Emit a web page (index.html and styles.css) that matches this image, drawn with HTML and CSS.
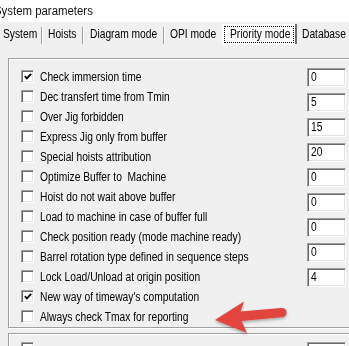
FILE: index.html
```html
<!DOCTYPE html>
<html>
<head>
<meta charset="utf-8">
<link rel="stylesheet" href="styles.css">
</head>
<body>
<div class="title"><span class="ttl">System parameters</span></div>
<div class="tabs">
  <div class="tab t1"><span class="lbl">System</span></div><div class="sep"></div>
  <div class="tab t2"><span class="lbl">Hoists</span></div><div class="sep"></div>
  <div class="tab t3"><span class="lbl">Diagram mode</span></div><div class="sep"></div>
  <div class="tab t4"><span class="lbl">OPI mode</span></div>
  <div class="tab sel"><span class="focus"><span class="lbl">Priority mode</span></span></div><div class="sep dark"></div>
  <div class="tab t6"><span class="lbl">Database</span></div>
</div>
<div class="panel">
  <div class="group">
    <div class="checks">
      <div class="row"><span class="cb"><svg viewBox="0 0 11 11" width="11" height="11"><path d="M2 5 L4.3 7.5 L9 2.5" fill="none" stroke="#000" stroke-width="2"/></svg></span><span class="lbl">Check immersion time</span></div>
      <div class="row"><span class="cb"></span><span class="lbl">Dec transfert time from Tmin</span></div>
      <div class="row"><span class="cb"></span><span class="lbl">Over Jig forbidden</span></div>
      <div class="row"><span class="cb"></span><span class="lbl">Express Jig only from buffer</span></div>
      <div class="row"><span class="cb"></span><span class="lbl">Special hoists attribution</span></div>
      <div class="row"><span class="cb"></span><span class="lbl">Optimize Buffer to &nbsp;Machine</span></div>
      <div class="row"><span class="cb"></span><span class="lbl">Hoist do not wait above buffer</span></div>
      <div class="row"><span class="cb"></span><span class="lbl">Load to machine in case of buffer full</span></div>
      <div class="row"><span class="cb"></span><span class="lbl">Check position ready (mode machine ready)</span></div>
      <div class="row"><span class="cb"></span><span class="lbl">Barrel rotation type defined in sequence steps</span></div>
      <div class="row"><span class="cb"></span><span class="lbl">Lock Load/Unload at origin position</span></div>
      <div class="row"><span class="cb"><svg viewBox="0 0 11 11" width="11" height="11"><path d="M2 5 L4.3 7.5 L9 2.5" fill="none" stroke="#000" stroke-width="2"/></svg></span><span class="lbl">New way of timeway's computation</span></div>
      <div class="row"><span class="cb"></span><span class="lbl">Always check Tmax for reporting</span></div>
    </div>
    <div class="inputs">
      <div class="inp"><span class="lbl">0</span></div>
      <div class="inp"><span class="lbl">5</span></div>
      <div class="inp"><span class="lbl">15</span></div>
      <div class="inp"><span class="lbl">20</span></div>
      <div class="inp"><span class="lbl">0</span></div>
      <div class="inp"><span class="lbl">0</span></div>
      <div class="inp"><span class="lbl">0</span></div>
      <div class="inp"><span class="lbl">0</span></div>
      <div class="inp"><span class="lbl">4</span></div>
    </div>
  </div>
  <div class="group group2">
    <div class="checks2"><div class="row"><span class="cb"></span></div></div>
    <div class="inputs2"><div class="inp"></div></div>
  </div>
</div>
<svg class="arrow" width="90" height="50" viewBox="205 292 90 50">
  <defs>
    <filter id="sh" x="-20%" y="-30%" width="140%" height="160%">
      <feDropShadow dx="0" dy="1.5" stdDeviation="1.5" flood-color="#000" flood-opacity="0.35"/>
    </filter>
  </defs>
  <path d="M215 320 L244 301.5 L240.5 311.5 L281 308 Q286.5 307.5 286.5 312.5 Q286.5 317 281 317.3 L241.5 321 L247 333 Z" fill="#e2443c" filter="url(#sh)"/>
</svg>
</body>
</html>
```
FILE: styles.css
```css
html, body {
  margin: 0;
  padding: 0;
}
body {
  width: 349px;
  height: 346px;
  overflow: hidden;
  background: #f0f0f0;
  position: relative;
  font-family: "Liberation Sans", Arial, sans-serif;
  font-size: 12.5px;
  color: #000;
}
.lbl {
  display: inline-block;
  transform: scaleX(0.82);
  transform-origin: left center;
  white-space: nowrap;
}
.title {
  height: 22px;
  line-height: 22px;
  background: #fff;
  font-size: 12px;
  color: #111;
  white-space: nowrap;
  overflow: hidden;
}
.ttl {
  display: inline-block;
  margin-left: -6px;
  transform: scaleX(0.95);
  transform-origin: left center;
}
.tabs {
  display: flex;
  height: 21px;
  align-items: stretch;
  white-space: nowrap;
  margin-top: 2px;
}
.tab {
  display: flex;
  align-items: center;
  box-sizing: border-box;
  overflow: hidden;
  padding-bottom: 1px;
}
.t1 { width: 41px; padding-left: 3px; }
.t2 { width: 39px; padding-left: 5px; }
.t3 { width: 79px; padding-left: 6px; }
.t4 { width: 57px; padding-left: 5px; }
.sel {
  width: 73px;
  background: #fff;
  padding-left: 2px;
  align-items: flex-start;
}
.focus {
  display: block;
  box-sizing: border-box;
  width: 70px;
  height: 17px;
  line-height: 15px;
  border: 1px dotted #000;
  padding-left: 5px;
  margin-top: 2px;
}
.t6 { flex: 1; padding-left: 5px; }
.sep {
  width: 1px;
  border-right: 1px solid #fff;
  background: #a0a0a0;
  margin: 3px 0 1px 0;
}
.sep.dark {
  width: 2px;
  border-right: 0;
  background: #6d6d6d;
  margin-top: 0;
}
.panel {
  padding-top: 13px;
  padding-left: 8px;
}
.group {
  width: 360px;
  box-sizing: border-box;
  border: 1px solid #a0a0a0;
  box-shadow: inset 1px 1px 0 #fff, 1px 1px 0 #fff;
  display: grid;
  grid-template-columns: 298px 39px;
  height: 270px;
}
.checks {
  padding-top: 7px;
  padding-left: 12px;
}
.row {
  height: 20px;
  display: flex;
  align-items: center;
  gap: 6px;
  white-space: nowrap;
  padding-top: 1px;
  box-sizing: border-box;
}
.cb {
  width: 13px;
  height: 13px;
  box-sizing: border-box;
  background: #fff;
  border-top: 1px solid #a0a0a0;
  border-left: 1px solid #a0a0a0;
  border-right: 1px solid #fff;
  border-bottom: 1px solid #fff;
  box-shadow: inset 1px 1px 0 #696969, inset -1px -1px 0 #e3e3e3;
  flex: none;
  display: flex;
  align-items: center;
  justify-content: center;
  margin-top: -1px;
}
.cb svg { display: block; margin: 1px 0 0 1px; }
.inputs {
  padding-top: 9px;
  display: flex;
  flex-direction: column;
  gap: 6px;
}
.inp {
  width: 39px;
  height: 19px;
  box-sizing: border-box;
  background: #fff;
  border-top: 1px solid #a0a0a0;
  border-left: 1px solid #a0a0a0;
  border-right: 1px solid #fff;
  border-bottom: 1px solid #fff;
  box-shadow: inset 1px 1px 0 #696969, inset -1px -1px 0 #e3e3e3;
  padding-left: 3px;
  line-height: 17px;
  font-size: 12.5px;
}
.group2 {
  margin-top: 5px;
  height: 40px;
}
.checks2 {
  padding-left: 12px;
  padding-top: 4px;
}
.inputs2 {
  padding-top: 8px;
}
.arrow {
  position: absolute;
  left: 205px;
  top: 292px;
}
```
